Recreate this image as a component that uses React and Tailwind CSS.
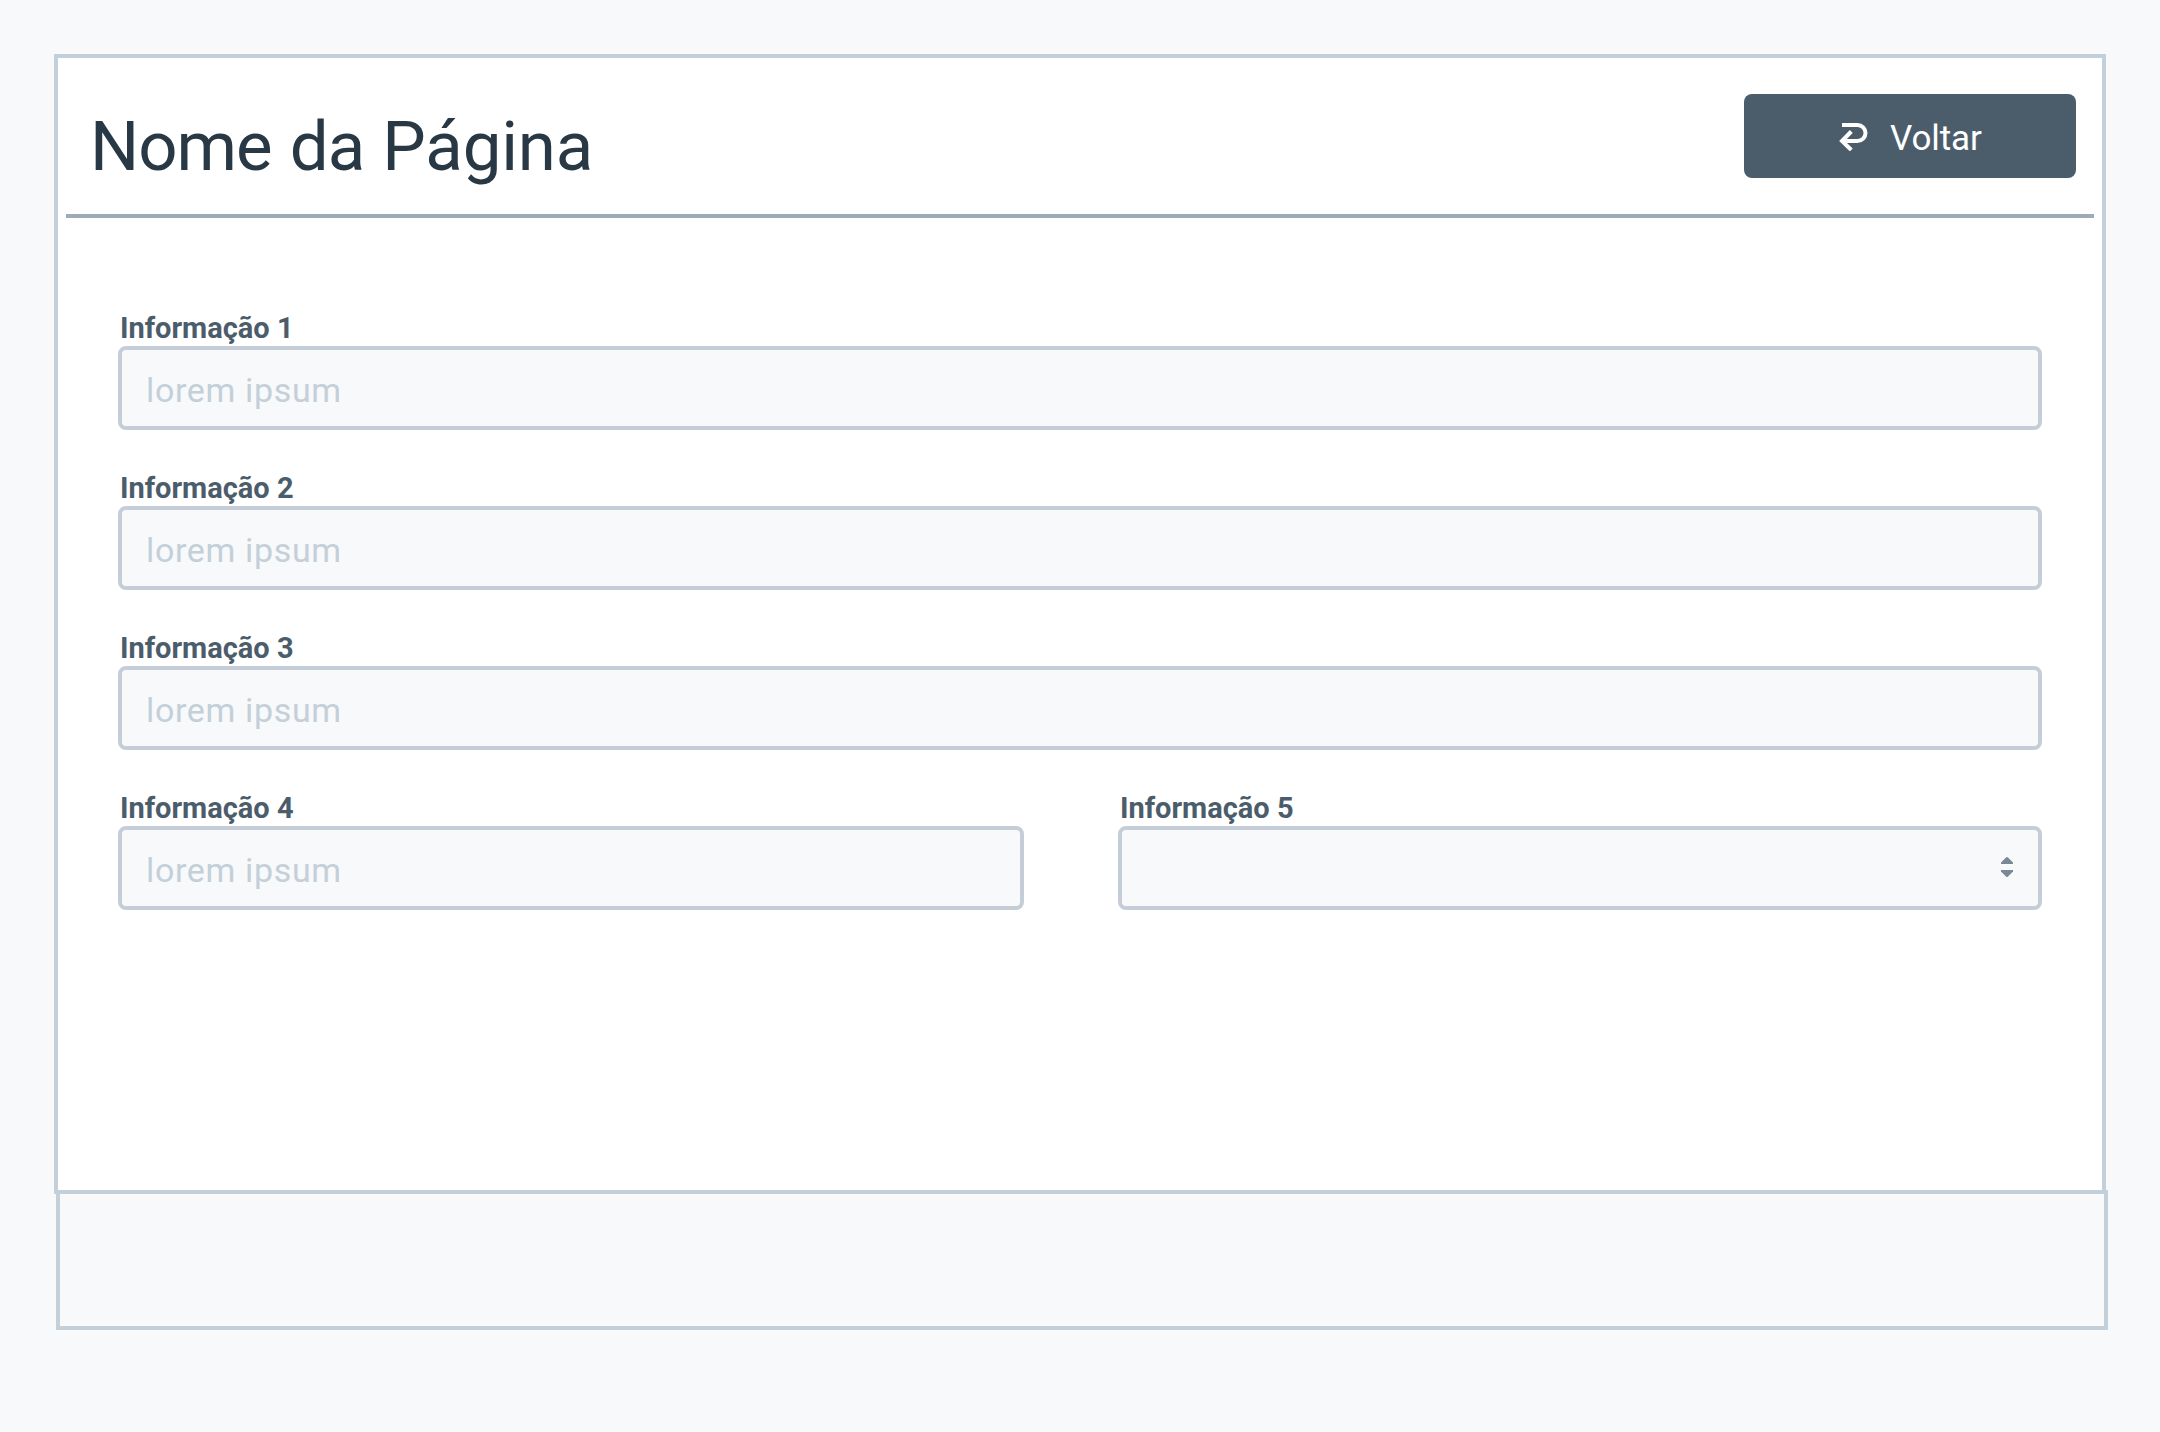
function BackIcon() {
  return (
    <svg width="30" height="30" viewBox="0 0 30 30" fill="none" stroke="currentColor" strokeWidth="4" className="shrink-0">
      <path d="M3 4H18.5a8 8 0 0 1 0 16H5" />
      <path d="M12.3 10.5L3 20l9.3 9" strokeLinejoin="miter" />
    </svg>
  );
}

function SortIcon() {
  return (
    <svg width="12" height="20" viewBox="0 0 12 20" fill="#788896" className="mb-0.5">
      <path d="M5 .6Q6-.4 7 .6L12 5.6V7H0V5.6Z" />
      <path d="M5 19.4Q6 20.4 7 19.4L12 14.4V13H0V14.4Z" />
    </svg>
  );
}

function Field({ label, placeholder, select }) {
  return (
    <label className="flex flex-col">
      <span className="flex h-9 items-center pl-0.5 text-[29px] leading-9 font-bold text-[#4b5d6b]">{label}</span>
      <span className="flex h-[84px] items-center justify-between rounded-lg border-4 border-[#c5ced8] bg-[#f8f9fb] pr-[25px] pl-6 text-[34px] leading-10 tracking-[0.65px] text-[#c3cfd9]">
        <span className="pt-1">{placeholder}</span>
        {select && <SortIcon />}
      </span>
    </label>
  );
}

export default function App() {
  return (
    <div className="h-[1432px] w-[2160px] overflow-hidden bg-[#f8f9fb] pt-[54px] pl-[54px] font-['Roboto',sans-serif]">
      <main className="h-[1140px] w-[2052px] border-4 border-[#c3cfd9] bg-white px-2">
        <header className="flex h-40 justify-between border-b-4 border-[#9cacb7] pr-[18px] pl-6">
          <h1 className="pt-[49px] text-[69px] leading-[80px] tracking-[-1px] whitespace-nowrap text-[#283845] [word-spacing:2px]">
            Nome da <span className="tracking-[-0.2px]">Página</span>
          </h1>
          <button className="mt-9 flex h-[84px] w-[332px] items-center rounded-lg bg-[#4b5d6b] pl-[95px] text-[35px] text-white">
            <BackIcon />
            <span className="pt-1.5 pl-[21px] tracking-[-0.1px]">Voltar</span>
          </button>
        </header>
        <section className="grid grid-cols-[906px_924px] gap-x-[94px] gap-y-10 px-[52px] pt-[92px]">
          <div className="col-span-2"><Field label="Informação 1" placeholder="lorem ipsum" /></div>
          <div className="col-span-2"><Field label="Informação 2" placeholder="lorem ipsum" /></div>
          <div className="col-span-2"><Field label="Informação 3" placeholder="lorem ipsum" /></div>
          <Field label="Informação 4" placeholder="lorem ipsum" />
          <Field label="Informação 5" select />
        </section>
      </main>
      <footer className="-mt-1 ml-0.5 h-[140px] w-[2052px] border-4 border-[#c3cfd9] bg-[#f8f9fb]" />
    </div>
  );
}
